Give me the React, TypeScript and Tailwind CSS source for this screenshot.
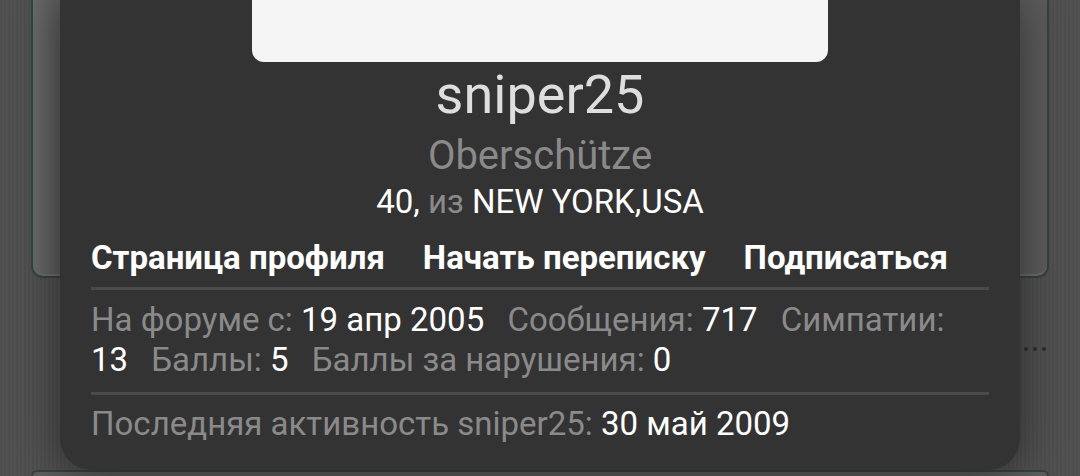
import React from "react";

const stats = [
  { label: "На форуме с:", value: "19 апр 2005" },
  { label: "Сообщения:", value: "717" },
  { label: "Симпатии:", value: "13" },
  { label: "Баллы:", value: "5" },
  { label: "Баллы за нарушения:", value: "0" },
];

const links = ["Страница профиля", "Начать переписку", "Подписаться"];

const App = () => {
  return (
    <div className="relative h-[476px] w-[1080px] overflow-hidden bg-[#4e4e4e] bg-[repeating-linear-gradient(90deg,#4d4d4d_0px,#4d4d4d_2px,#515151_2px,#515151_4px)] font-['Roboto',sans-serif]">
      {/* thread under the popup */}
      <div className="px-[31px]">
        <div className="h-[278px] rounded-b-[12px] border-2 border-t-0 border-[#34433a] bg-[linear-gradient(90deg,#686868_0px,#5c5c5c_24px,#5a5a5a_100%)] shadow-[inset_0_-2px_0_#6a6a6a]" />
        <div className="flex h-[192px] items-start justify-end pr-[3px] pt-[56px]">
          <div className="flex h-[30px] items-center gap-[5px]">
            <div className="h-[30px] w-[30px] rounded-full bg-[#3a3a3a]" />
            <span className="h-[4px] w-[4px] rounded-full bg-[#2e2e2e]" />
            <span className="h-[4px] w-[4px] rounded-full bg-[#2e2e2e]" />
            <span className="h-[4px] w-[4px] rounded-full bg-[#2e2e2e]" />
          </div>
        </div>
        <div className="h-[10px] rounded-t-[6px] border-2 border-b-0 border-[#34433a] bg-[#5c5c5c]" />
      </div>

      {/* member popup */}
      <div className="absolute left-[60px] top-0 flex h-[470px] w-[960px] flex-col rounded-b-[32px] bg-[#333333] px-[31px] shadow-[0_4px_40px_rgba(0,0,0,0.45)]">
        <div className="mx-auto h-[62px] w-[576px] rounded-b-[12px] bg-[#f5f5f5]" />
        <div className="mt-[6px] text-center text-[54px] leading-[54px] text-[#dedede]">sniper25</div>
        <div className="mt-[11px] text-center text-[40px] leading-[46px] text-[#8a8a8a]">Oberschütze</div>
        <div className="mt-[3px] text-center text-[33px] leading-[40px] text-white">
          40, <span className="text-[#8a8a8a]">из</span> NEW YORK,USA
        </div>
        <div className="mt-[16px] flex gap-[38px] text-[33px] font-bold leading-[40px] text-white">
          {links.map((l) => (
            <span key={l}>{l}</span>
          ))}
        </div>
        <div className="mt-[9px] h-[3px] bg-[#4a4a4a]" />
        <div className="mt-[10px] text-[33px] leading-[40px] text-[#8a8a8a]">
          {stats.map((s) => (
            <React.Fragment key={s.label}>
              <span className="mr-[15px]">
                {s.label} <span className="text-white">{s.value}</span>
              </span>{" "}
            </React.Fragment>
          ))}
        </div>
        <div className="mt-[12px] h-[3px] bg-[#4a4a4a]" />
        <div className="mt-[9px] text-[33px] leading-[40px] text-[#8a8a8a]">
          Последняя активность sniper25: <span className="text-white">30 май 2009</span>
        </div>
      </div>
    </div>
  );
};

export default App;
